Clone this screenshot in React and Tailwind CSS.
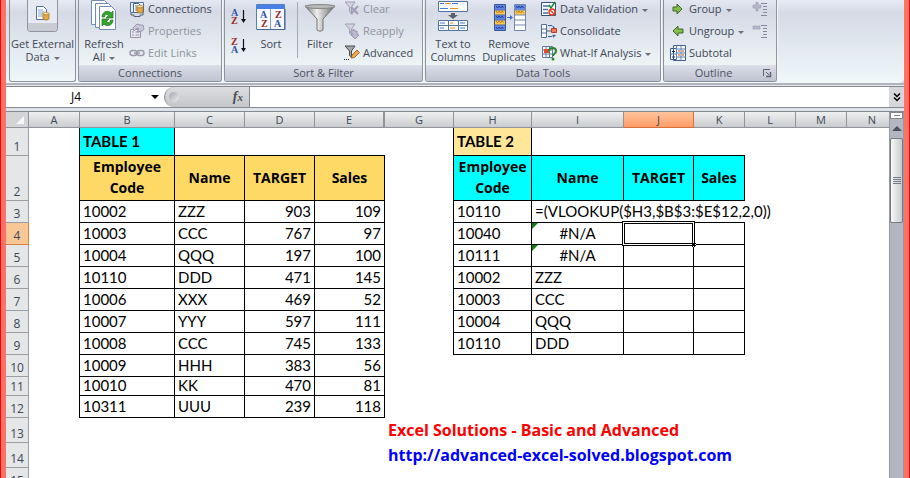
import React from "react";

const arrow = <span className="ml-1 inline-block border-x-[3px] border-t-[3px] border-x-transparent border-t-[#6b6f78] align-middle" />;

function Group({ label, className = "", launcher, children }) {
  return (
    <section
      aria-label={label}
      className={`flex h-[83px] shrink-0 flex-col overflow-hidden rounded-b-[3px] border-x border-b border-[#8e929b] bg-linear-to-b from-[#e6e9f3] from-0% via-[#d5dae6] via-15% to-[#eff6f6] to-85% shadow-[1px_0_0_#f7f9fc] ${className}`}
    >
      <div className="flex h-[66px] items-end px-1 pb-px">{children}</div>
      <div className="flex h-4 items-center bg-linear-to-b from-[#dcdfea] to-[#bfc2d0] text-[#4a5362]">
        <span className="flex-1 text-center">{label}</span>
        {launcher && (
          <button aria-label="Outline settings" className="mr-1">
            <svg width="9" height="9" viewBox="0 0 9 9" className="block" fill="none" stroke="#5f6473">
              <path d="M.5 7V.5H7M3 3l3 3" />
              <path d="M7.500 3v4.500H3" strokeWidth="1.500" />
            </svg>
          </button>
        )}
      </div>
    </section>
  );
}

function Big({ icon, lines, menu, className = "" }) {
  return (
    <button className={`flex h-16 flex-col items-center leading-[13px] text-[#3f4756] ${className}`}>
      <span className="flex h-[37px] shrink-0 items-start">{icon}</span>
      <span className="whitespace-nowrap">{lines[0]}</span>
      <span className="whitespace-nowrap">
        {lines[1]}
        {menu && arrow}
      </span>
    </button>
  );
}

function Small({ icon, label, disabled, menu }) {
  return (
    <button disabled={disabled} className="flex h-[22px] items-center gap-[3px] whitespace-nowrap text-[#3f4756] disabled:text-[#8f939d]">
      <span className="flex w-4 shrink-0 justify-center">{icon}</span>
      <span>
        {label}
        {menu && arrow}
      </span>
    </button>
  );
}

const Svg = ({ w = 16, h = 16, children }) => (
  <svg width={w} height={h} viewBox={`0 0 ${w} ${h}`} className="block" aria-hidden="true">
    {children}
  </svg>
);

const Cylinder = ({ x, y }) => (
  <g transform={`translate(${x} ${y})`}>
    <path d="M0 1.500v5c0 2 6 2 6 0v-5z" fill="#e8a642" stroke="#9b6d20" strokeWidth=".7" />
    <ellipse cx="3" cy="1.500" rx="3" ry="1.300" fill="#ffe3a0" stroke="#9b6d20" strokeWidth=".6" />
  </g>
);

const ExternalIcon = (
  <span className="flex h-8 w-[31px] flex-col overflow-hidden rounded-b-[4px] border border-t-0 border-[#8f95a0] bg-[#e6e9f1]">
    <span className="flex h-6 items-center justify-center pt-1">
      <Svg w={18} h={18}>
        <path d="M2.500 1.500h7l3 3v10h-10z" fill="#fff" stroke="#4f6ea5" />
        <path d="M4 5h5M4 7h6M4 9h5M4 11h5" stroke="#86a4d4" />
        <Cylinder x={9} y={7} />
      </Svg>
    </span>
    <span className="h-2 bg-[#c9ccd3]" />
  </span>
);

const RefreshIcon = (
  <Svg w={28} h={32}>
    <g fill="#fff" stroke="#718cb2">
      <path d="M1.500.5h13l4 4v20h-17z" />
      <path d="M5.500 3.500h13l4 4v20h-17z" />
      <path d="M9.500 6.500h12l4 4v19h-16z" />
    </g>
    <path d="M12 17c0-6 7-7 9-4l2-2v7h-7l2.500-2.500c-2-2-4-1-4 1.500z" fill="#35a52c" stroke="#1c731b" strokeWidth=".7" />
    <path d="M23 20c0 6-7 7-9 4l-2 2v-7h7l-2.500 2.500c2 2 4 1 4-1.500z" fill="#35a52c" stroke="#1c731b" strokeWidth=".7" />
  </Svg>
);

const ConnectionsIcon = (
  <Svg>
    <path d="M1.500 1.500h13v10h-13z" fill="#e8eefa" stroke="#5b7199" />
    <path d="M4.500 2.500h5l2 2v7h-7z" fill="#fff" stroke="#4265a0" />
    <path d="M6 5h3M6 7h3M6 9h3" stroke="#5580c4" />
    <Cylinder x={8} y={4} />
    <path d="M2 12v2h3v1.500h6V14h3v-2" fill="none" stroke="#4f607e" />
  </Svg>
);

const PropertiesIcon = (
  <Svg>
    <path d="M1.500 6.500h10v8h-10z" fill="#e7e6ef" stroke="#9895ad" />
    <path d="M3 9h2M6.500 9h4M3 12h2M6.500 12h4" stroke="#9895ad" />
    <path d="M4 5l4-4 3 1 3 0 1 4-2 2-5 1 2-3-2-1-3 3z" fill="#c9c6d8" stroke="#9a97b0" />
  </Svg>
);

const LinksIcon = (
  <Svg h={10}>
    <rect x="1" y="2.500" width="7" height="5" rx="2.500" fill="none" stroke="#9c9cac" strokeWidth="1.500" />
    <rect x="8" y="2.500" width="7" height="5" rx="2.500" fill="none" stroke="#9c9cac" strokeWidth="1.500" />
    <path d="M5 5h6" stroke="#9c9cac" strokeWidth="1.500" />
  </Svg>
);

const letter = "font-['Liberation_Serif',serif] text-[10px] font-bold";

const SortArrow = ({ first, second }) => (
  <Svg w={16} h={17}>
    <text x="0" y="8" fill={first === "A" ? "#31559f" : "#9a2525"} className={letter}>{first}</text>
    <text x="0" y="16" fill={second === "A" ? "#31559f" : "#9a2525"} className={letter}>{second}</text>
    <path d="M12.500 2v10" stroke="#111" strokeWidth="1.200" />
    <path d="M10 11h5l-2.500 4z" fill="#111" />
  </Svg>
);

const SortIcon = (
  <Svg w={30} h={27}>
    <path d="M.5.5h28v25H.5z" fill="#f8faff" stroke="#567fc0" />
    <path d="M1 1h27v4H1z" fill="#4a7fe8" />
    <path d="M14.500 5v20" stroke="#7e9bcb" />
    <path d="M1 25.500h28V5" fill="none" stroke="#47658f" />
    <g className={letter}>
      <text x="4" y="14" fill="#31559f">A</text>
      <text x="5" y="23" fill="#9a2525">Z</text>
      <text x="19" y="14" fill="#9a2525">Z</text>
      <text x="18" y="23" fill="#31559f">A</text>
    </g>
  </Svg>
);

const FilterIcon = (
  <Svg w={32} h={28}>
    <defs>
      <linearGradient id="funnel">
        <stop offset="0" stopColor="#777" />
        <stop offset=".4" stopColor="#eee" />
        <stop offset="1" stopColor="#666" />
      </linearGradient>
    </defs>
    <path d="M1 2l12 13v11c2 1.500 4 1.500 6 0V15L31 2z" fill="url(#funnel)" stroke="#727272" />
    <ellipse cx="16" cy="2.500" rx="15" ry="2" fill="#b9b9b9" stroke="#858585" />
  </Svg>
);

const SmallFilter = ({ kind }) => (
  <Svg>
    <path d="M1 1h10L7.500 6v6l-2-1.500V6z" fill={kind === "edit" ? "#a4a8ab" : "#d3d1df"} stroke={kind === "edit" ? "#4b4b4b" : "#a19eb5"} />
    {kind === "clear" && <path d="M7 6l7 7M14 5l-7 8" stroke="#a29eb8" strokeWidth="2" />}
    {kind === "redo" && <path d="M6 9l4-3v2h3v3l2 1-4 4-4-4h2v-1z" fill="#bcb8cd" stroke="#9b97b2" />}
    {kind === "edit" && (
      <g>
        <path d="M7 13l1-3 5-5 2.500 2.500-5 5z" fill="#eda94b" stroke="#81501c" strokeWidth=".8" />
        <path d="M0 14.500h6" stroke="#222" strokeDasharray="1 1" />
      </g>
    )}
  </Svg>
);

const TextColumnsIcon = (
  <Svg w={31} h={32}>
    <g fill="#fff" stroke="#52729f">
      <path d="M.5 1.500h29v10H.5zM.5 20.500h29v10H.5zM.5 25.500h29M10.500 20.500v10M20.500 20.500v10" />
    </g>
    <path d="M2 3.500h4M14 3.500h6M2 8.500h8M2 23h5M22 23h5M2 28h4M22 28h5" stroke="#477bd4" />
    <path d="M7 3.500h6M12 8.500h8M12 23h3M12 28h5" stroke="#f28c18" />
    <path d="M13 13h4v2h3l-5 4-5-4h3z" fill="#5c6068" />
  </Svg>
);

const zig = (x, y) => `M${x} ${y}l1.500 2 1.500-2 1.500 2 1.500-2 1.500 2`;

const DuplicatesIcon = (
  <Svg w={33} h={30}>
    <path d="M1.500 2.500h11v26h-11z" fill="#6288e8" stroke="#3c5495" />
    <path d="M2 8h10v5H2zM2 18h10v5H2z" fill="#ffc94e" />
    <path d="M1.500 8h11M1.500 13h11M1.500 18h11M1.500 23h11" stroke="#4963a3" />
    <path d={zig(3, 4) + zig(3, 14) + zig(3, 25)} stroke="#243c91" fill="none" />
    <path d={zig(3, 9) + zig(3, 19)} stroke="#bf831d" fill="none" />
    <path d="M14 15h3v-2l3 2.500-3 2.500v-2h-3z" fill="#416ccc" />
    <path d="M21.500 2.500h11v26h-11z" fill="#fff" stroke="#7387a8" />
    <path d="M22 3h10v5H22z" fill="#6288e8" />
    <path d="M22 8h10v5H22z" fill="#ffc94e" />
    <path d="M22 8h10M22 13h10M22 18h10M22 23h10" stroke="#7387a8" />
    <path d={zig(23, 4)} stroke="#243c91" fill="none" />
    <path d={zig(23, 9)} stroke="#bf831d" fill="none" />
  </Svg>
);

const ValidationIcon = (
  <Svg>
    <path d="M.5 1.500h14v13H.5z" fill="#fff" stroke="#345479" />
    <path d="M2 5h6M2 8.500h5M2 12h5" stroke="#466fa9" strokeWidth="1.500" />
    <path d="M8 4l2 3 4-6" stroke="#198b2b" strokeWidth="1.500" fill="none" />
    <circle cx="11" cy="11" r="3" fill="#fff" stroke="#e24022" strokeWidth="1.500" />
    <path d="M9 9l4 4" stroke="#e24022" strokeWidth="1.200" />
  </Svg>
);

const ConsolidateIcon = (
  <Svg>
    <path d="M.5 1.500h5v13h-5zM.5 6h5M.5 10h5" fill="#fff" stroke="#566e95" />
    <path d="M7 2.500h4l2 2M7 13.500h4l2-2M6 8h4" fill="none" stroke="#40608e" />
    <path d="M12 3v3h3zM12 12v3l3-3z" fill="#40608e" />
    <path d="M10.500 5.500h5v4h-5z" fill="#f47a5a" stroke="#b83b24" />
  </Svg>
);

const WhatIfIcon = (
  <Svg>
    <path d="M1.500 1.500h10v11h-10zM1.500 5h10M1.500 9h10M5 1.500v11M8.500 1.500v11" fill="#fff" stroke="#617aa3" />
    <path d="M3 4h5v4H3z" fill="#e74b2c" />
    <path d="M8 6c0-4 7-4 7 0 0 3-3 2.500-3 5" fill="none" stroke="#27822e" strokeWidth="2" />
    <circle cx="12" cy="14" r="1.500" fill="#27822e" />
  </Svg>
);

const GreenArrow = ({ left }) => (
  <Svg w={14} h={12}>
    <path d={left ? "M12 4H7V1L2 6l5 5V8h5z" : "M2 4h4V1l5 5-5 5V8H2z"} fill="#83be4c" stroke="#47622f" />
  </Svg>
);

const SubtotalIcon = (
  <Svg>
    <path d="M3.500.5h12v15h-12zM.5 3.500h6v11h-6z" fill="#fff" stroke="#3c5f8e" />
    <path d="M6.500 4h9M6.500 8h9M6.500 12h9M11 .5v15M.5 9h6M6.500.5v15" stroke="#5f82b5" />
    <path d="M2 6.500h3M3.500 5v3M2 12h3M3.500 10.500v3" stroke="#203e71" />
    <path d="M8 6h2M12 6h2M8 10h2M12 10h2" stroke="#ee8831" strokeWidth="1.500" />
  </Svg>
);

const DetailIcon = ({ plus }) => (
  <Svg h={14}>
    <path d={plus ? "M1 3h3V0h2v3h3v3H6v3H4V6H1z" : "M1 2h7v3H1z"} fill="#bab7cc" stroke="#9b98ae" strokeWidth=".6" />
    <path d="M9 1.500h6M11 4.500h4M11 7.500h4M11 10.500h4M9 13.500h6" stroke="#86869c" />
  </Svg>
);

function Ribbon() {
  return (
    <div className="border-b-2 border-[#b0b4bc] bg-[#d4d8e2]">
      <div className="flex h-[83px] gap-0.5 overflow-hidden rounded-br-[5px] bg-linear-to-b from-[#e9ebf5] from-0% via-[#d5dae5] via-15% to-[#f0f8fa] pl-[3px] text-[11px] leading-4">
        <div className="flex h-[82px] w-[67px] shrink-0 items-end justify-center rounded-b-[3px] border-x border-b border-[#8e929b] pb-[17px]">
          <Big icon={ExternalIcon} lines={["Get External", "Data"]} menu />
        </div>
        <Group label="Connections" className="w-36 -mt-px">
          <Big icon={RefreshIcon} lines={["Refresh", "All"]} menu className="w-[42px]" />
          <div className="ml-1">
            <Small icon={ConnectionsIcon} label="Connections" />
            <Small icon={PropertiesIcon} label="Properties" disabled />
            <Small icon={LinksIcon} label="Edit Links" disabled />
          </div>
        </Group>
        <Group label="Sort & Filter" className="w-[199px] -mt-px">
          <div className="flex h-16 w-6 flex-col gap-3 pt-2 pl-0.5">
            <button aria-label="Sort A to Z"><SortArrow first="A" second="Z" /></button>
            <button aria-label="Sort Z to A"><SortArrow first="Z" second="A" /></button>
          </div>
          <Big icon={<span className="pt-1">{SortIcon}</span>} lines={["Sort"]} className="w-9" />
          <span className="mb-1.5 ml-2 h-14 w-px bg-[#a4a8b1]" />
          <Big icon={<span className="pt-1">{FilterIcon}</span>} lines={["Filter"]} className="ml-1 w-9" />
          <div className="ml-1.5">
            <Small icon={<SmallFilter kind="clear" />} label="Clear" disabled />
            <Small icon={<SmallFilter kind="redo" />} label="Reapply" disabled />
            <Small icon={<SmallFilter kind="edit" />} label="Advanced" />
          </div>
        </Group>
        <Group label="Data Tools" className="w-[236px] -mt-px">
          <Big icon={TextColumnsIcon} lines={["Text to", "Columns"]} className="w-[46px]" />
          <Big icon={<span className="pt-0.5">{DuplicatesIcon}</span>} lines={["Remove", "Duplicates"]} className="ml-[3px] w-[60px]" />
          <div className="ml-0.5">
            <Small icon={ValidationIcon} label="Data Validation" menu />
            <Small icon={ConsolidateIcon} label="Consolidate" />
            <Small icon={WhatIfIcon} label="What-If Analysis" menu />
          </div>
        </Group>
        <Group label="Outline" className="w-[114px] -mt-px" launcher>
          <div className="flex-1 pl-0.5">
            <Small icon={<GreenArrow />} label="Group" menu />
            <Small icon={<GreenArrow left />} label="Ungroup" menu />
            <Small icon={SubtotalIcon} label="Subtotal" />
          </div>
          <div className="mr-1 mb-[22px] flex h-11 flex-col">
            <button aria-label="Show Detail" className="flex h-[22px] items-center"><DetailIcon plus /></button>
            <button aria-label="Hide Detail" className="flex h-[22px] items-center"><DetailIcon /></button>
          </div>
        </Group>
      </div>
    </div>
  );
}

function FormulaBar() {
  return (
    <div className="flex h-[22px] border-y border-[#85888f] bg-white">
      <input aria-label="Name box" defaultValue="J4" className="w-[140px] bg-white text-center text-xs text-black outline-none" />
      <button aria-label="Named ranges" className="flex w-[18px] items-center justify-center">
        <span className="border-x-4 border-t-4 border-x-transparent border-t-black" />
      </button>
      <div className="flex w-[85px] items-center justify-between rounded-l-full border-l border-[#85888f] bg-linear-to-b from-[#dcdde1] to-[#c5c6ca] pr-1.5 pl-1">
        <span className="size-2.5 rounded-full bg-linear-to-br from-[#a4a6af] to-[#eeeff2]" />
        <button aria-label="Insert function" className="font-['Liberation_Serif',serif] text-sm leading-none font-bold text-[#4c4f55] italic">
          f<span className="text-[11px]">x</span>
        </button>
      </div>
      <input aria-label="Formula" className="min-w-0 flex-1 border-l border-[#85888f] bg-white px-1 text-xs outline-none" />
      <button aria-label="Expand formula bar" className="flex w-[15px] items-center justify-center bg-[#d6d7dc]">
        <svg width="8" height="9" viewBox="0 0 8 9" fill="none" stroke="#000" strokeWidth="1.500">
          <path d="M1 .5l3 3 3-3M1 4.500l3 3 3-3" />
        </svg>
      </button>
    </div>
  );
}

const columns = ["A", "B", "C", "D", "E", "G", "H", "I", "J", "K", "L", "M", "N"];
const widths = ["w-[51px]", "w-[95px]", "w-[70px]", "w-[70px]", "w-[70px]", "w-[69px]", "w-[78px]", "w-[92px]", "w-[70px]", "w-[51px]", "w-[51px]", "w-[51px]", ""];

const left = [
  ["10002", "ZZZ", 903, 109],
  ["10003", "CCC", 767, 97],
  ["10004", "QQQ", 197, 100],
  ["10110", "DDD", 471, 145],
  ["10006", "XXX", 469, 52],
  ["10007", "YYY", 597, 111],
  ["10008", "CCC", 745, 133],
  ["10009", "HHH", 383, 56],
  ["10010", "KK", 470, 81],
  ["10311", "UUU", 239, 118],
];

const right = [
  ["10110", "=(VLOOKUP($H3,$B$3:$E$12,2,0))"],
  ["10040", "#N/A"],
  ["10111", "#N/A"],
  ["10002", "ZZZ"],
  ["10003", "CCC"],
  ["10004", "QQQ"],
  ["10110", "DDD"],
];

const box = "border-r border-b border-black px-[3px]";
const edge = "border-r border-black";

function RowHead({ n, active }) {
  return (
    <th
      scope="row"
      className={`border-r border-b p-0 align-bottom text-xs leading-4 font-normal text-[#3b4856] font-['Open_Sans',sans-serif] ${
        active ? "border-[#d9803f] bg-[#f9c795]" : "border-[#9a9da3] bg-[#e5e6e8]"
      }`}
    >
      {n}
    </th>
  );
}

function DataRow({ values, index }) {
  const n = index + 3;
  const other = right[index];
  const formula = index === 0;
  const error = other && other[1] === "#N/A";
  return (
    <tr className={n === 11 ? "h-[19px]" : "h-[22px]"}>
      <RowHead n={n} active={n === 4} />
      <td className={edge} />
      <td className={box}>{values[0]}</td>
      <td className={box}>{values[1]}</td>
      <td className={`${box} text-right`}>{values[2]}</td>
      <td className={`${box} text-right`}>{values[3]}</td>
      <td className={other ? edge : ""} />
      {!other && <td colSpan={7} />}
      {other && <td className={box}>{other[0]}</td>}
      {other && formula && <td colSpan={3} className="border-b border-black px-[3px]">{other[1]}</td>}
      {other && !formula && (
        <>
          <td className={`${box} relative ${error ? "text-center" : ""}`}>
            {error && <span className="absolute top-0 left-0 border-t-[6px] border-r-[6px] border-t-[#0b7d12] border-r-transparent" />}
            {other[1]}
          </td>
          <td className={`${box} relative`}>
            {n === 4 && (
              <span className="absolute -inset-0.5 z-10 border-[3px] border-double border-black bg-white">
                <span className="absolute -right-1 -bottom-1 size-[5px] border border-dotted border-white bg-black" />
              </span>
            )}
          </td>
          <td className={box} />
        </>
      )}
      {other && <td colSpan={3} />}
    </tr>
  );
}

function Sheet() {
  return (
    <table className="w-full table-fixed border-separate border-spacing-0 bg-white text-[15px] leading-4 whitespace-nowrap text-black font-['Lato',sans-serif] [&_td]:pt-0 [&_td]:pb-0.5">
      <colgroup>
        <col className="w-[23px]" />
        {columns.map((c, i) => <col key={c} className={widths[i]} />)}
      </colgroup>
      <thead>
        <tr className="h-4 text-[11px] leading-[15px] text-[#3b4856] font-['Open_Sans',sans-serif]">
          <th className="border-r border-b border-[#909399] bg-[#d3d4d7] p-0" aria-label="Select all">
            <span className="ml-auto mr-1 block size-0 border-b-8 border-l-8 border-b-[#f7f7f8] border-l-transparent" />
          </th>
          {columns.map((c) => (
            <th
              key={c}
              scope="col"
              className={`border-b py-0 pr-0 font-normal ${c === "E" ? "border-r-2 pl-0" : c === "N" ? "pl-2" : "border-r pl-0"} ${
                c === "J" ? "border-[#d9703a] bg-linear-to-b from-[#ffc39b] to-[#ff9c68]" : "border-[#909399] bg-linear-to-b from-[#eff0f0] to-[#cbcccf]"
              }`}
            >
              {c}
            </th>
          ))}
        </tr>
      </thead>
      <tbody>
        <tr className="h-7 font-bold">
          <RowHead n={1} />
          <td className={edge} />
          <td className={`${box} bg-[#00ffff]`}>TABLE 1</td>
          <td className="border-b border-black" />
          <td className="border-b border-black" />
          <td className="border-b border-black" />
          <td className={edge} />
          <td className={`${box} bg-[#ffe699]`}>TABLE 2</td>
          <td className="border-b border-black" />
          <td className="border-b border-black" />
          <td className="border-b border-black" />
          <td colSpan={3} />
        </tr>
        <tr className="h-[45px] text-center text-sm leading-[21px] font-bold font-['Open_Sans',sans-serif]">
          <RowHead n={2} />
          <td className={edge} />
          <td className={`${box} bg-[#ffd966]`}>Employee<br />Code</td>
          <td className={`${box} bg-[#ffd966]`}>Name</td>
          <td className={`${box} bg-[#ffd966]`}>TARGET</td>
          <td className={`${box} bg-[#ffd966]`}>Sales</td>
          <td className={edge} />
          <td className={`${box} bg-[#00ffff]`}>Employee<br />Code</td>
          <td className={`${box} bg-[#00ffff]`}>Name</td>
          <td className={`${box} bg-[#00ffff]`}>TARGET</td>
          <td className={`${box} bg-[#00ffff]`}>Sales</td>
          <td colSpan={3} />
        </tr>
        {left.map((values, i) => <DataRow key={values[0]} values={values} index={i} />)}
        <tr className="h-[25px] text-base leading-5 font-bold text-[#ff0000] font-['Open_Sans',sans-serif]">
          <RowHead n={13} />
          <td colSpan={5} />
          <td colSpan={8} className="px-[3px]">Excel Solutions - Basic and Advanced</td>
        </tr>
        <tr className="h-[25px] text-base leading-5 font-bold font-['Open_Sans',sans-serif]">
          <RowHead n={14} />
          <td colSpan={5} />
          <td colSpan={8} className="px-[3px]">
            <a href="http://advanced-excel-solved.blogspot.com" className="text-[#0000ff]">http://advanced-excel-solved.blogspot.com</a>
          </td>
        </tr>
        <tr className="h-[22px]">
          <RowHead n={15} />
          <td colSpan={13} />
        </tr>
      </tbody>
    </table>
  );
}

function Scrollbar() {
  return (
    <div className="flex w-[15px] shrink-0 flex-col border-x border-[#96999f] bg-[#b3b6c0]">
      <div className="flex h-[7px] items-center justify-center border border-[#85888f] bg-white">
        <span className="h-px w-1.5 bg-[#7d8087]" />
      </div>
      <button aria-label="Scroll up" className="flex h-[19px] items-center justify-center">
        <span className="border-x-[5px] border-b-[5px] border-x-transparent border-b-[#4c525b]" />
      </button>
      <div className="flex h-[85px] flex-col items-center justify-center gap-px rounded-xs border border-[#777a81] bg-linear-to-r from-[#f8f8f9] to-[#c8cacf]">
        <span className="h-px w-2 bg-[#777a81]" />
        <span className="h-px w-2 bg-[#777a81]" />
        <span className="h-px w-2 bg-[#777a81]" />
        <span className="h-px w-2 bg-[#777a81]" />
      </div>
    </div>
  );
}

export default function App() {
  return (
    <div className="flex h-screen overflow-hidden border-x border-[#ff0000] bg-[#fa7268] px-[5px] font-['Open_Sans','Noto_Sans',sans-serif]">
      <main className="flex min-w-0 flex-1 flex-col bg-[#dfe3ec]">
        <Ribbon />
        <div className="h-px shrink-0 bg-[#e4e6ec]" />
        <FormulaBar />
        <div className="mt-[3px] flex min-h-0 flex-1 overflow-hidden border-t border-[#85888f] bg-white">
          <div className="min-w-0 flex-1 overflow-hidden">
            <Sheet />
          </div>
          <Scrollbar />
        </div>
      </main>
    </div>
  );
}
